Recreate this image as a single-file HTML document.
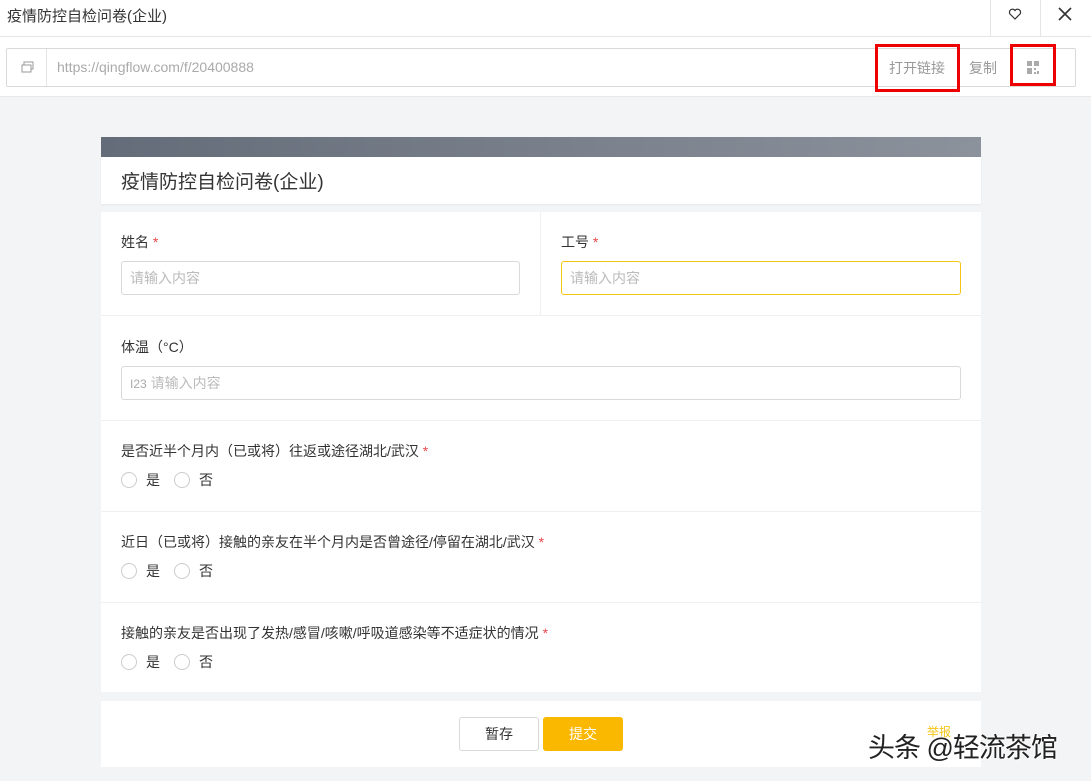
<!DOCTYPE html>
<html><head><meta charset="utf-8"><style>
*{box-sizing:border-box;margin:0;padding:0}
body{width:1091px;height:781px;overflow:hidden;background:#f3f4f6;font-family:"Liberation Sans","Noto Sans CJK SC",sans-serif;color:#333;position:relative}
.abs{position:absolute}
.top{left:0;top:0;width:1091px;height:37px;background:#fff;border-bottom:1px solid #e5e5e5}
.bar2{left:0;top:37px;width:1091px;height:60px;background:#fff;border-bottom:1px solid #e8e8e8}
.url{left:6px;top:48px;width:1070px;height:39px;border:1px solid #d9d9d9;border-radius:2px;background:#fff}
.card{left:101px;width:880px;background:#fff}
.lbl{position:absolute;left:20px;font-size:14px;color:#333}
.req{color:#e5484d}
.inp{position:absolute;height:34px;border:1px solid #d9d9d9;border-radius:3px;font-size:14px;color:#bbb;padding:6px 8px}
.radio{position:absolute;left:20px;font-size:14px;color:#333;display:flex;align-items:center}
.rc{width:16px;height:16px;border:1px solid #ccc;border-radius:50%;display:inline-block;margin-right:9px}
.row{position:absolute;left:0;width:880px;border-top:1px solid #f0f0f0}
</style></head><body>
<div class="abs top">
<div class="abs" style="left:7px;top:5px;font-size:15px;color:#333">疫情防控自检问卷(企业)</div>
<div class="abs" style="left:990px;top:0;width:1px;height:36px;background:#e5e5e5"></div>
<div class="abs" style="left:1040px;top:0;width:1px;height:36px;background:#e5e5e5"></div>
<svg class="abs" style="left:1008px;top:7px" width="14" height="14" viewBox="0 0 14 14"><path d="M7 12 L2 7 A2.7 2.7 0 0 1 7 3.5 A2.7 2.7 0 0 1 12 7 Z" fill="none" stroke="#333" stroke-width="1.2"/></svg>
<svg class="abs" style="left:1057px;top:6px" width="16" height="16" viewBox="0 0 16 16"><path d="M2 2L14 14M14 2L2 14" stroke="#333" stroke-width="1.6"/></svg>
</div>
<div class="abs bar2"></div>
<div class="abs url">
<div class="abs" style="left:39px;top:0;width:1px;height:37px;background:#e5e5e5"></div>
<svg class="abs" style="left:14px;top:12px" width="13" height="13" viewBox="0 0 13 13"><rect x="3" y="1" width="9" height="7" fill="none" stroke="#999"/><rect x="1" y="4" width="9" height="7" fill="#fff" stroke="#999"/></svg>
<div class="abs" style="left:50px;top:10px;font-size:14px;color:#aaa">https://qingflow.com/f/20400888</div>
<div class="abs" style="left:882px;top:9px;font-size:14px;color:#999">打开链接</div>
<div class="abs" style="left:962px;top:9px;font-size:14px;color:#999">复制</div>
<svg class="abs" style="left:1019px;top:11px" width="14" height="15" viewBox="0 0 14 15"><rect x="1" y="1" width="5" height="5" fill="#aaa"/><rect x="8" y="1" width="5" height="5" fill="#aaa"/><rect x="1" y="8" width="5" height="6" fill="#aaa"/><rect x="8" y="8" width="2" height="2" fill="#aaa"/><rect x="11" y="11" width="2" height="3" fill="#aaa"/><rect x="8" y="12" width="2" height="2" fill="#aaa"/></svg>
</div>
<div class="abs" style="left:875px;top:44px;width:85px;height:48px;border:3px solid #e00"></div>
<div class="abs" style="left:1010px;top:44px;width:46px;height:42px;border:3px solid #e00"></div>

<div class="abs card" style="top:137px;height:20px;background:linear-gradient(90deg,#646c79,#8c929c)"></div>
<div class="abs card" style="top:157px;height:47px;box-shadow:0 1px 2px rgba(0,0,0,.06)">
<div class="abs" style="left:20px;top:10px;font-size:19px;color:#333">疫情防控自检问卷(企业)</div></div>

<div class="abs card" style="top:212px;height:480px">
<div class="abs" style="left:439px;top:0;width:1px;height:103px;background:#f0f0f0"></div>
<div class="lbl" style="top:20px">姓名 <span class="req">*</span></div>
<div class="inp" style="left:20px;top:49px;width:399px">请输入内容</div>
<div class="lbl" style="left:460px;top:20px">工号 <span class="req">*</span></div>
<div class="inp" style="left:460px;top:49px;width:400px;border-color:#f5c518">请输入内容</div>
<div class="row" style="top:103px;height:105px">
<div class="lbl" style="top:21px">体温（°C）</div>
<div class="inp" style="left:20px;top:50px;width:840px"><span style="font-size:12px;color:#aaa">I23</span> 请输入内容</div>
</div>
<div class="row" style="top:208px;height:91px">
<div class="lbl" style="top:20px">是否近半个月内（已或将）往返或途径湖北/武汉 <span class="req">*</span></div>
<div class="radio" style="top:49px"><span class="rc"></span>是<span class="rc" style="margin-left:14px"></span>否</div>
</div>
<div class="row" style="top:299px;height:91px">
<div class="lbl" style="top:20px">近日（已或将）接触的亲友在半个月内是否曾途径/停留在湖北/武汉 <span class="req">*</span></div>
<div class="radio" style="top:49px"><span class="rc"></span>是<span class="rc" style="margin-left:14px"></span>否</div>
</div>
<div class="row" style="top:390px;height:90px">
<div class="lbl" style="top:20px">接触的亲友是否出现了发热/感冒/咳嗽/呼吸道感染等不适症状的情况 <span class="req">*</span></div>
<div class="radio" style="top:49px"><span class="rc"></span>是<span class="rc" style="margin-left:14px"></span>否</div>
</div>
</div>

<div class="abs card" style="top:701px;height:66px">
<div class="abs" style="left:358px;top:16px;width:80px;height:34px;border:1px solid #d9d9d9;border-radius:3px;font-size:14px;text-align:center;line-height:32px">暂存</div>
<div class="abs" style="left:442px;top:16px;width:80px;height:34px;background:#fbb800;border-radius:3px;font-size:14px;color:#fff;text-align:center;line-height:34px">提交</div>
<div class="abs" style="left:826px;top:22px;font-size:12px;color:#f5c518">举报</div>
</div>
<div class="abs" style="left:868px;top:726px;font-size:27px;color:#222;letter-spacing:-1px;text-shadow:1px 1px 0 #fff,-1px -1px 0 #fff">头条 @轻流茶馆</div>
</body></html>
